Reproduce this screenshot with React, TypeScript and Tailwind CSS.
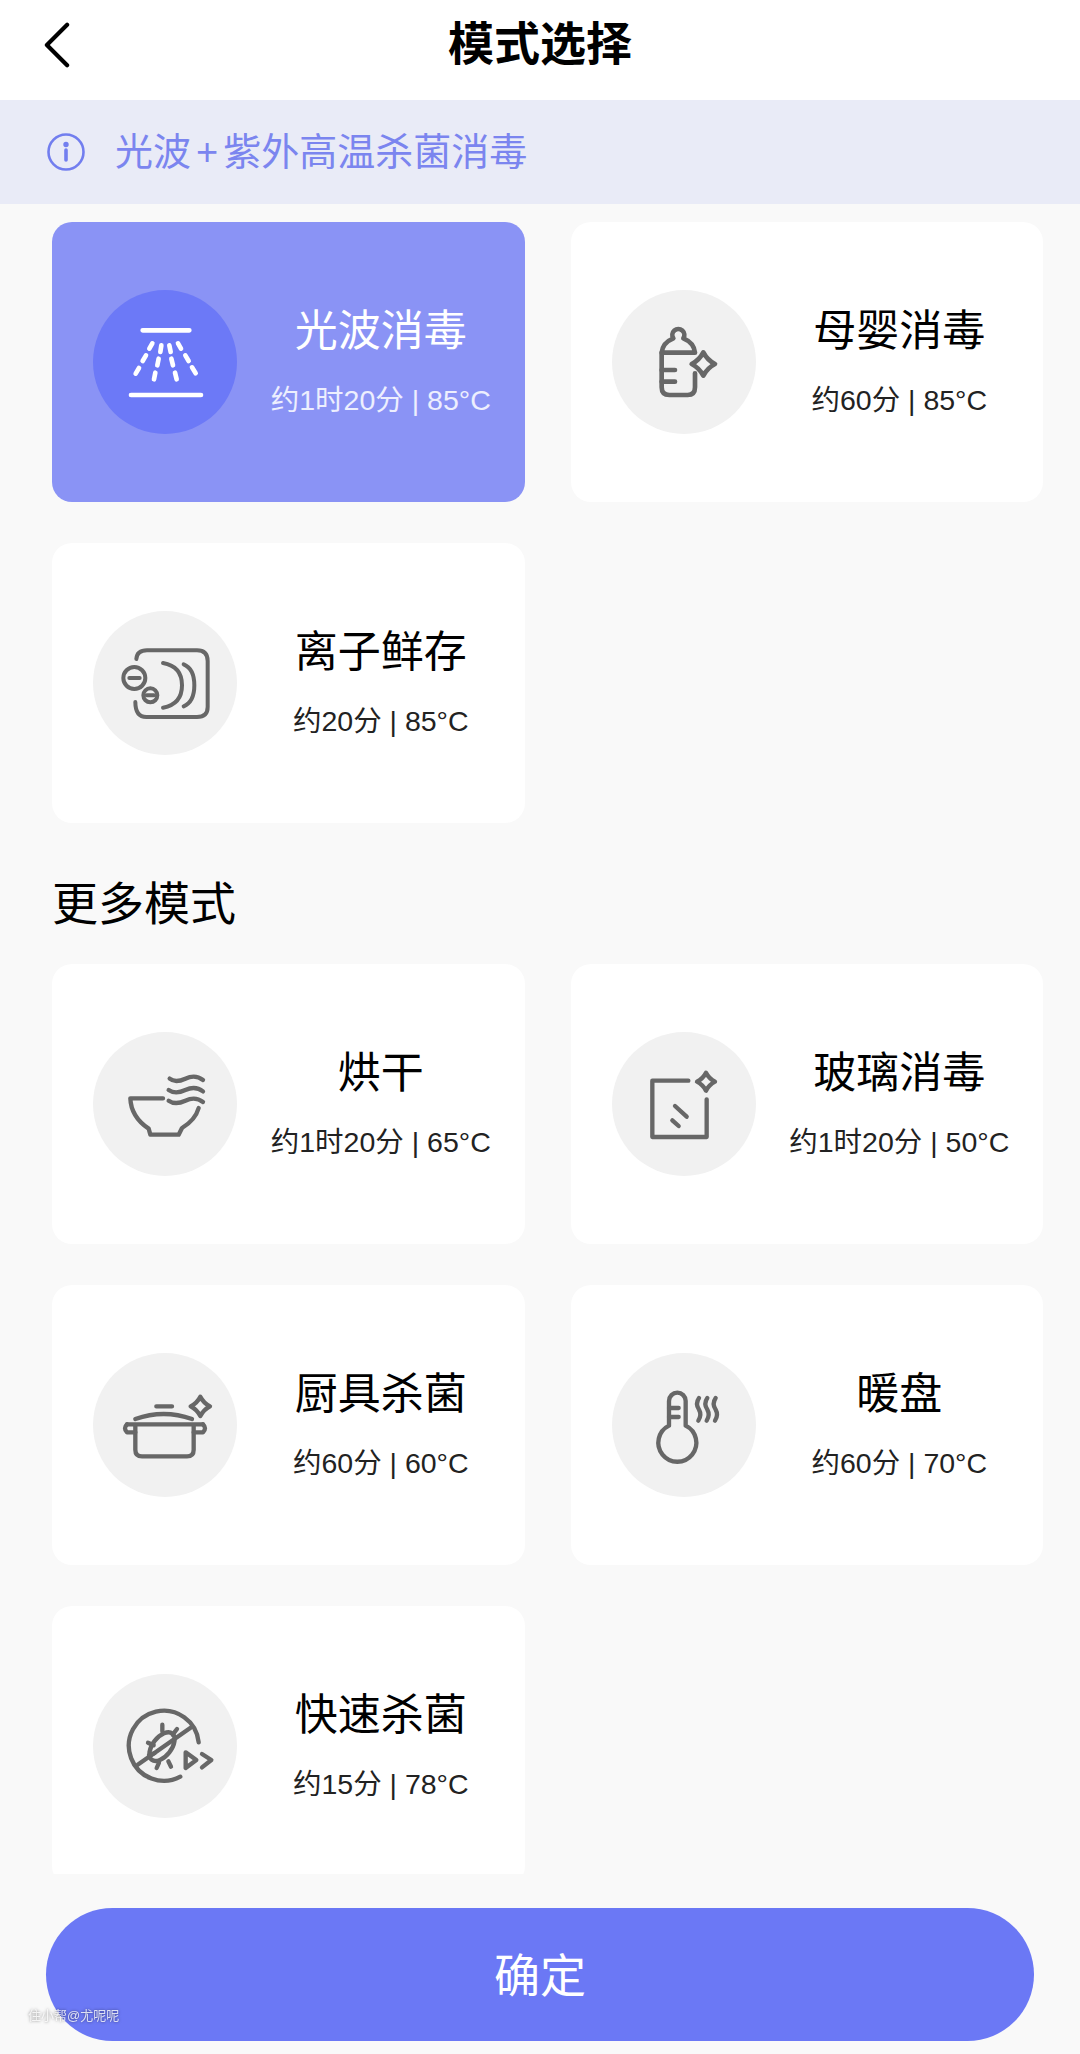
import React from "react";

const FONT = { fontFamily: '"Liberation Sans", "Noto Sans CJK SC", sans-serif' };

const Star = ({ x, y, r }: { x: number; y: number; r: number }) => {
  const k = r * 0.34;
  return (
    <path
      d={`M${x} ${y - r} Q${x + k} ${y - k} ${x + r} ${y} Q${x + k} ${y + k} ${x} ${y + r} Q${x - k} ${y + k} ${x - r} ${y} Q${x - k} ${y - k} ${x} ${y - r}Z`}
    />
  );
};

const Icon = ({ box, width = 12, color = "#676767", children }: { box: string; width?: number; color?: string; children: React.ReactNode }) => (
  <svg viewBox={box} className="w-full h-full" fill="none" stroke={color} strokeWidth={width} strokeLinecap="round" strokeLinejoin="round">
    {children}
  </svg>
);

const WaveIcon = () => (
  <Icon box="38 60 432 432" width={14} color="#ffffff">
    <path d="M187 181H327M152 375H362" />
    <path d="M216 220L207 236M243 226L240 246M267 226L271 246M293 220L302 236" />
    <path d="M197 256L187 273M235 266L231 286M273 266L278 286M315 256L325 273" />
    <path d="M176 294L166 311M225 308L221 328M284 308L289 328M335 292L346 310" />
  </Icon>
);

const BottleIcon = () => (
  <Icon box="96 60 432 432" width={14}>
    <path d="M245 248H345Q342 218 310 205A18 18 0 1 0 280 205Q248 218 245 248Z" />
    <path d="M245 248V352Q245 375 268 375H323Q345 375 345 352V310" />
    <path d="M245 300H285M245 335H285" />
    <Star x={370} y={282} r={35} />
  </Icon>
);

const IonIcon = () => (
  <Icon box="38 32 432 432" width={12}>
    <path d="M168 176Q170 150 200 150H350Q382 150 382 182V320Q382 350 350 350H198Q165 350 165 305" />
    <path d="M248 188Q305 198 305 255Q305 312 248 322M310 192Q342 205 342 255Q342 305 310 318" />
    <circle cx={162} cy={233} r={33} />
    <path d="M147 233H178" />
    <circle cx={210} cy={285} r={21} />
    <path d="M199 285H221" />
  </Icon>
);

const BowlIcon = () => (
  <Icon box="38 38 432 432" width={13}>
    <path d="M248 237H150Q152 292 205 328L210 346H295L305 326Q345 302 355 266" />
    <path d="M268 178Q285 192 315 178T368 182M265 212Q285 226 315 212T368 216M265 244Q285 258 315 244T368 248" />
  </Icon>
);

const GlassIcon = () => (
  <Icon box="36 38 432 432" width={13}>
    <path d="M265 184H157V353H320V240" />
    <path d="M225 260L260 292M217 303L236 320" />
    <Star x={318} y={187} r={27} />
  </Icon>
);

const PotIcon = () => (
  <Icon box="38 40 432 432" width={13}>
    <path d="M165 238Q250 208 335 238M228 200H275" />
    <path d="M140 254H368M165 254V330Q165 350 185 350H320Q340 350 340 330V254" />
    <path d="M140 254Q128 265 140 278H165M368 254Q380 265 368 278H340" />
    <Star x={360} y={200} r={29} />
  </Icon>
);

const ThermoIcon = () => (
  <Icon box="36 40 432 432" width={13}>
    <path d="M207 258V184A25 25 0 0 1 257 184V258A57 57 0 1 1 207 258Z" />
    <path d="M207 205H236M207 232H236" />
    <path d="M297 175Q285 192 297 210Q306 226 295 243M322 175Q310 192 322 210Q331 226 320 243M347 175Q335 192 347 210Q356 226 345 243" />
  </Icon>
);

const QuickIcon = () => (
  <Icon box="38 40 432 432" width={13}>
    <path d="M355 245A105 105 0 1 0 300 348" />
    <path d="M172 312L335 198" />
    <ellipse cx={245} cy={258} rx={28} ry={50} transform="rotate(38 245 258)" />
    <path d="M246 192V212M290 205L277 222M203 246L220 254M206 284L222 278M229 322L236 306M272 318L264 302" />
    <path d="M316 275L348 298L316 322Z" />
    <path d="M365 280L393 298L365 320" />
  </Icon>
);

const ModeCard = ({ icon, title, sub, active }: { icon: React.ReactNode; title: string; sub: string; active?: boolean }) => (
  <div className={`h-[280px] rounded-[20px] pl-[41px] flex items-center ${active ? "bg-[#8a93f5]" : "bg-white"}`}>
    <div className={`w-[144px] h-[144px] shrink-0 rounded-full ${active ? "bg-[#6c79f7]" : "bg-[#f1f1f1]"}`}>{icon}</div>
    <div className="flex-1 flex flex-col items-center pb-[4px]">
      <div className={`text-[43px] leading-[56px] ${active ? "text-white" : "text-black"}`}>{title}</div>
      <div className={`mt-[23px] text-[28.5px] leading-[36px] whitespace-nowrap ${active ? "text-white/85" : "text-[#222222]"}`}>{sub}</div>
    </div>
  </div>
);

export default function App() {
  return (
    <div className="relative h-[2054px] flex flex-col bg-[#f9f9f9] overflow-hidden" style={FONT}>
      {/* Header */}
      <header className="relative h-[100px] shrink-0 bg-white flex items-center justify-center">
        <svg viewBox="0 0 30 50" className="absolute left-[42px] top-[22px] w-[30px] h-[46px]" fill="none" stroke="#000000" strokeWidth={4.5} strokeLinecap="round" strokeLinejoin="round">
          <path d="M26 3L4 25L26 47" />
        </svg>
        <h1 className="text-[46px] leading-[60px] font-bold text-black -mt-[12px]">模式选择</h1>
      </header>

      {/* Tip */}
      <div className="h-[104px] shrink-0 bg-[#e9ebf7] flex items-center pl-[47px]">
        <svg viewBox="0 0 38 38" className="w-[38px] h-[38px]" fill="none" stroke="#727eef" strokeWidth={2.6} strokeLinecap="round">
          <circle cx={19} cy={19} r={17.5} />
          <path d="M19 17V27" strokeWidth={3.6} />
          <circle cx={19} cy={11.5} r={1.4} fill="#727eef" />
        </svg>
        <p className="ml-[30px] text-[38px] leading-[50px] text-[#7b85ef] whitespace-nowrap">光波<span className="px-[5px]">+</span>紫外高温杀菌消毒</p>
      </div>

      {/* Modes */}
      <main className="h-[1670px] shrink-0 overflow-hidden pt-[18px] pl-[52px] pr-[37px]">
        <div className="grid grid-cols-2 gap-x-[46px] gap-y-[41px]">
          <ModeCard active icon={<WaveIcon />} title="光波消毒" sub="约1时20分 | 85°C" />
          <ModeCard icon={<BottleIcon />} title="母婴消毒" sub="约60分 | 85°C" />
          <ModeCard icon={<IonIcon />} title="离子鲜存" sub="约20分 | 85°C" />
        </div>
        <h2 className="pt-[58px] pb-[37px] text-[46px] leading-[46px] text-black">更多模式</h2>
        <div className="grid grid-cols-2 gap-x-[46px] gap-y-[41px]">
          <ModeCard icon={<BowlIcon />} title="烘干" sub="约1时20分 | 65°C" />
          <ModeCard icon={<GlassIcon />} title="玻璃消毒" sub="约1时20分 | 50°C" />
          <ModeCard icon={<PotIcon />} title="厨具杀菌" sub="约60分 | 60°C" />
          <ModeCard icon={<ThermoIcon />} title="暖盘" sub="约60分 | 70°C" />
          <ModeCard icon={<QuickIcon />} title="快速杀菌" sub="约15分 | 78°C" />
        </div>
      </main>

      {/* Confirm */}
      <div className="pt-[34px] pl-[46px] pr-[46px]">
        <button className="w-full h-[133px] rounded-full bg-[#6b78f5] text-white text-[46px] pt-[4px]">确定</button>
      </div>

      {/* Watermark */}
      <span className="absolute left-[28px] top-[2007px] text-[13px] leading-[18px] text-white/80 blur-[0.5px] [text-shadow:0_0_3px_rgba(0,0,0,0.5)]">住小帮@尤呢呢</span>
    </div>
  );
}
